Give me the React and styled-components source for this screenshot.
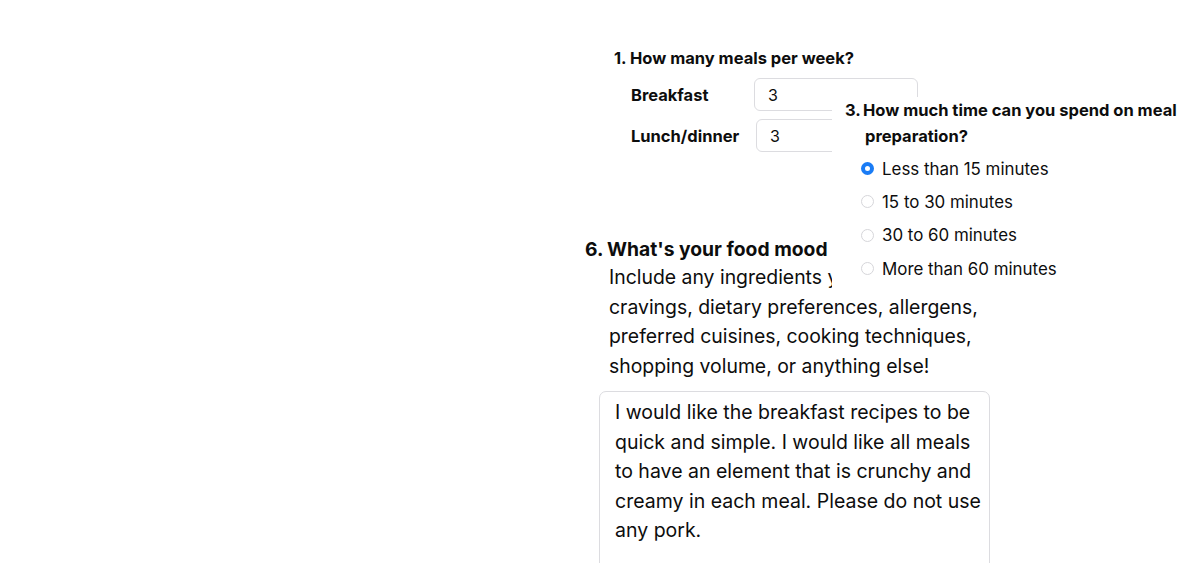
import styled, { createGlobalStyle } from "styled-components";

let GlobalStyle = createGlobalStyle`
  html, body {
    margin: 0;
    padding: 0;
    background: #ffffff;
  }
  body {
    font-family: Inter, "Noto Sans", "Liberation Sans", sans-serif;
    color: #0d0d0d;
  }
`

let Page = styled.div`
  position: relative;
  width: 1201px;
  height: 563px;
  overflow: hidden;
  background: #ffffff;
`

let Column = styled.div`
  display: flex;
  flex-direction: column;
  padding-left: 585px;
  padding-top: 46px;
`

let MealsBlock = styled.div`
  padding-left: 29px;
`

let Heading = styled.div`
  display: flex;
  font-weight: 700;
  font-size: ${props => props.size}px;
  line-height: ${props => props.lh}px;
`

let Num = styled.span`
  flex: none;
  width: ${props => props.w}px;
`

let MealRow = styled.div`
  display: flex;
  align-items: center;
  padding-left: 17px;
  margin-top: ${props => props.mt}px;
`

let MealLabel = styled.label`
  width: ${props => props.w}px;
  font-size: 16.5px;
  font-weight: 700;
`

let NumberBox = styled.div`
  box-sizing: border-box;
  width: 164px;
  height: 33px;
  border: 1px solid #dcdce0;
  border-radius: 6px;
  padding: 0 13px;
  display: flex;
  align-items: center;
  font-size: 16px;
`

let MoodBlock = styled.div`
  margin-top: 83px;
`

let Hint = styled.p`
  margin: 0;
  padding-left: 24px;
  width: 392px;
  font-size: 19.4px;
  line-height: 29.5px;
`

let Notes = styled.textarea`
  box-sizing: border-box;
  display: block;
  margin: 10px 0 0 14px;
  width: 391px;
  height: 200px;
  padding: 6px 4px 6px 15px;
  border: 1px solid #dcdce0;
  border-radius: 7px;
  font-family: inherit;
  font-size: 19.5px;
  line-height: 29.5px;
  color: #0d0d0d;
  resize: none;
  outline: none;
  overflow: hidden;
  background: #ffffff;
`

let TimePanel = styled.div`
  position: absolute;
  left: 832px;
  top: 97px;
  width: 380px;
  padding: 0 0 10px 13px;
  background: #ffffff;
`

let Options = styled.div`
  display: flex;
  flex-direction: column;
  margin-top: 3px;
  padding-left: 16px;
`

let Option = styled.label`
  display: flex;
  align-items: center;
  height: 33.3px;
  font-size: 16.9px;
`

let Dot = styled.span`
  box-sizing: border-box;
  flex: none;
  width: 13px;
  height: 13px;
  border-radius: 50%;
  margin-right: 8px;
  border: ${props => props.on ? '4px solid #1a7cf5' : '1px solid #d6d6da'};
  background: #ffffff;
`

let Wrap = styled.span`
  padding-left: ${props => props.indent}px;
  text-indent: -${props => props.indent}px;
`

let times = ['Less than 15 minutes', '15 to 30 minutes', '30 to 60 minutes', 'More than 60 minutes'];

function App(){
  return (
    <Page>
      <GlobalStyle />
      <Column>
        <MealsBlock>
          <Heading size={16.5} lh={24}>
            <Num w={16}>1.</Num>
            <span>How many meals per week?</span>
          </Heading>
          <MealRow mt={8}>
            <MealLabel w={123}>Breakfast</MealLabel>
            <NumberBox>3</NumberBox>
          </MealRow>
          <MealRow mt={8}>
            <MealLabel w={125}>Lunch/dinner</MealLabel>
            <NumberBox>3</NumberBox>
          </MealRow>
        </MealsBlock>

        <MoodBlock>
          <Heading size={19.3} lh={28}>
            <Num w={22}>6.</Num>
            <span>What's your food mood</span>
          </Heading>
          <Hint>
            Include any ingredients you have on hand, cravings, dietary preferences, allergens, preferred cuisines, cooking techniques, shopping volume, or anything else!
          </Hint>
          <Notes
            readOnly
            defaultValue="I would like the breakfast recipes to be quick and simple. I would like all meals to have an element that is crunchy and creamy in each meal. Please do not use any pork."
          />
        </MoodBlock>
      </Column>

      <TimePanel>
        <Heading size={16.5} lh={26}>
          <Num w={18}>3.</Num>
          <Wrap indent={2}>How much time can you spend on meal preparation?</Wrap>
        </Heading>
        <Options>
          {
            times.map((t, i) => (
              <Option key={t}>
                <Dot on={i === 0} />
                {t}
              </Option>
            ))
          }
        </Options>
      </TimePanel>
    </Page>
  );
}

export default App;
